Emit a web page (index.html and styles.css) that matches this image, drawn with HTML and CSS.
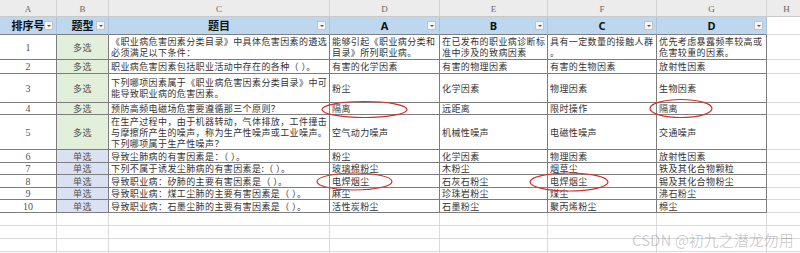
FILE: index.html
```html
<!DOCTYPE html>
<html lang="zh">
<head>
<meta charset="utf-8">
<title>Sheet</title>
<link rel="stylesheet" href="styles.css">
</head>
<body>
<div class="sheet">
  <div class="grid">
    <div class="c let">A</div><div class="c let">B</div><div class="c let">C</div><div class="c let">D</div><div class="c let">E</div><div class="c let">F</div><div class="c let">G</div><div class="c let">H</div>

    <div class="c hd">排序号<span class="flt"></span></div>
    <div class="c hd">题型<span class="flt"></span></div>
    <div class="c hd">题目<span class="flt"></span></div>
    <div class="c hd en">A<span class="flt"></span></div>
    <div class="c hd en">B<span class="flt"></span></div>
    <div class="c hd en">C<span class="flt"></span></div>
    <div class="c hd en">D<span class="flt"></span></div>
    <div class="c e"></div>

    <div class="c d num">1</div><div class="c d typ multi">多选</div>
    <div class="c d txt">《职业病危害因素分类目录》中具体危害因素的遴选<br>必须满足以下条件：</div>
    <div class="c d txt">能够引起《职业病分类和<br>目录》所列职业病。</div>
    <div class="c d txt">在已发布的职业病诊断标<br>准中涉及的致病因素</div>
    <div class="c d txt">具有一定数量的接触人群<br>。</div>
    <div class="c d txt">优先考虑暴露频率较高或<br>危害较重的因素。</div>
    <div class="c e"></div>

    <div class="c d num">2</div><div class="c d typ multi">多选</div>
    <div class="c d txt">职业病危害因素包括职业活动中存在的各种（ ）。</div>
    <div class="c d txt">有害的化学因素</div>
    <div class="c d txt">有害的物理因素</div>
    <div class="c d txt">有害的生物因素</div>
    <div class="c d txt">放射性因素</div>
    <div class="c e"></div>

    <div class="c d num">3</div><div class="c d typ multi">多选</div>
    <div class="c d txt">下列哪项因素属于《职业病危害因素分类目录》中可<br>能导致职业病的危害因素。</div>
    <div class="c d txt">粉尘</div>
    <div class="c d txt">化学因素</div>
    <div class="c d txt">物理因素</div>
    <div class="c d txt">生物因素</div>
    <div class="c e"></div>

    <div class="c d num">4</div><div class="c d typ multi">多选</div>
    <div class="c d txt">预防高频电磁场危害要遵循那三个原则？</div>
    <div class="c d txt">隔离</div>
    <div class="c d txt">远距离</div>
    <div class="c d txt">限时操作</div>
    <div class="c d txt">隔离</div>
    <div class="c e"></div>

    <div class="c d num">5</div><div class="c d typ multi">多选</div>
    <div class="c d txt">在生产过程中，由于机器转动，气体排放，工件撞击<br>与摩擦所产生的噪声，称为生产性噪声或工业噪声。<br>下列哪项属于生产性噪声？</div>
    <div class="c d txt">空气动力噪声</div>
    <div class="c d txt">机械性噪声</div>
    <div class="c d txt">电磁性噪声</div>
    <div class="c d txt">交通噪声</div>
    <div class="c e"></div>

    <div class="c d num">6</div><div class="c d typ single">单选</div>
    <div class="c d txt">导致尘肺病的有害因素是：（ ）。</div>
    <div class="c d txt">粉尘</div>
    <div class="c d txt">化学因素</div>
    <div class="c d txt">物理因素</div>
    <div class="c d txt">放射性因素</div>
    <div class="c e"></div>

    <div class="c d num">7</div><div class="c d typ single">单选</div>
    <div class="c d txt">下列不属于诱发尘肺病的有害因素是:（ ）。</div>
    <div class="c d txt">玻璃棉粉尘</div>
    <div class="c d txt">木粉尘</div>
    <div class="c d txt">烟草尘</div>
    <div class="c d txt">铁及其化合物颗粒</div>
    <div class="c e"></div>

    <div class="c d num">8</div><div class="c d typ single">单选</div>
    <div class="c d txt">导致职业病：矽肺的主要有害因素是（ ）。</div>
    <div class="c d txt">电焊烟尘</div>
    <div class="c d txt">石灰石粉尘</div>
    <div class="c d txt">电焊烟尘</div>
    <div class="c d txt">锡及其化合物粉尘</div>
    <div class="c e"></div>

    <div class="c d num">9</div><div class="c d typ single">单选</div>
    <div class="c d txt">导致职业病：煤工尘肺的主要有害因素是（ ）。</div>
    <div class="c d txt">麻尘</div>
    <div class="c d txt">珍珠岩粉尘</div>
    <div class="c d txt">煤尘</div>
    <div class="c d txt">沸石粉尘</div>
    <div class="c e"></div>

    <div class="c d num">10</div><div class="c d typ single">单选</div>
    <div class="c d txt">导致职业病：石墨尘肺的主要有害因素是（ ）。</div>
    <div class="c d txt">活性炭粉尘</div>
    <div class="c d txt">石墨粉尘</div>
    <div class="c d txt">聚丙烯粉尘</div>
    <div class="c d txt">棉尘</div>
    <div class="c e"></div>

    <div class="c e"></div><div class="c e"></div><div class="c e"></div><div class="c e"></div><div class="c e"></div><div class="c e"></div><div class="c e"></div><div class="c e"></div>
    <div class="c e"></div><div class="c e"></div><div class="c e"></div><div class="c e"></div><div class="c e"></div><div class="c e"></div><div class="c e"></div><div class="c e"></div>
    <div class="c e"></div><div class="c e"></div><div class="c e"></div><div class="c e"></div><div class="c e"></div><div class="c e"></div><div class="c e"></div><div class="c e"></div>
    <div class="c e"></div><div class="c e"></div><div class="c e"></div><div class="c e"></div><div class="c e"></div><div class="c e"></div><div class="c e"></div><div class="c e"></div>
  </div>

  <svg class="marks" width="800" height="253" viewBox="0 0 800 253">
    <ellipse cx="364.5" cy="109.5" rx="42.5" ry="8" />
    <ellipse cx="681" cy="108.5" rx="31" ry="9" />
    <ellipse cx="354.5" cy="181.5" rx="37.5" ry="8.5" />
    <ellipse cx="569" cy="182" rx="39" ry="9" />
  </svg>

  <div class="wm">CSDN @初九之潜龙勿用</div>
</div>
</body>
</html>
```

FILE: styles.css
```css
html, body {
  margin: 0;
  padding: 0;
  background: #ffffff;
  overflow: hidden;
}

.sheet {
  position: relative;
  width: 800px;
  height: 253px;
  overflow: hidden;
}

.grid {
  display: grid;
  grid-template-columns: 57px 52px 221px 110px 108px 109px 110px 40px;
  grid-template-rows: 17px 18px 25px 14px 29px 12px 35px 13px 12px 13px 12px 13px 13px 13px 13px 13px;
}

.c {
  box-sizing: border-box;
  border-right: 1px solid #dadada;
  border-bottom: 1px solid #dadada;
  display: flex;
  align-items: center;
  overflow: hidden;
  white-space: nowrap;
  font-family: "Noto Sans CJK SC", "Noto Sans", sans-serif;
  font-size: 9px;
  line-height: 11px;
  letter-spacing: 0.4px;
  color: #333333;
}

.let {
  background: #ececec;
  justify-content: center;
  align-items: flex-end;
  padding-bottom: 1px;
  font-family: "Liberation Serif", serif;
  font-size: 9px;
  letter-spacing: 0;
  color: #666666;
  border-right-color: #d2d2d2;
  border-bottom-color: #c9c9c9;
}

.hd {
  position: relative;
  background: #bdd7ee;
  justify-content: center;
  font-size: 11px;
  font-weight: 700;
  letter-spacing: 0;
  color: #111111;
  border-right-color: #a8c3de;
  border-bottom-color: #7f7f7f;
}

.hd.en {
  font-family: "Noto Sans", "Open Sans", sans-serif;
  font-size: 11px;
}

.flt {
  position: absolute;
  right: 3px;
  top: 4px;
  width: 9px;
  height: 9px;
  box-sizing: border-box;
  background: #f4f4f4;
  border: 1px solid #c4c4c4;
}

.flt::after {
  content: "";
  position: absolute;
  left: 2px;
  top: 3px;
  width: 0;
  height: 0;
  border-left: 2px solid transparent;
  border-right: 2px solid transparent;
  border-top: 2px solid #555555;
}

.d {
  border-right-color: #7d7d7d;
  border-bottom-color: #7d7d7d;
}

.num {
  justify-content: center;
  font-family: "Liberation Serif", serif;
  font-size: 10px;
  letter-spacing: 0;
  color: #555555;
}

.typ {
  justify-content: center;
  color: #555555;
}

.multi {
  background: #e2efda;
}

.single {
  background: #d9e1f2;
}

.txt {
  padding-left: 2px;
}

.e {
  background: #ffffff;
}

.marks {
  position: absolute;
  left: 0;
  top: 0;
  pointer-events: none;
}

.marks ellipse {
  fill: none;
  stroke: #d2302c;
  stroke-width: 1.2;
}

.wm {
  position: absolute;
  left: 632px;
  top: 230px;
  font-family: "Noto Sans CJK SC", "Noto Sans", sans-serif;
  font-size: 15px;
  line-height: 20px;
  color: rgba(0, 0, 0, 0.2);
  white-space: nowrap;
}
```
